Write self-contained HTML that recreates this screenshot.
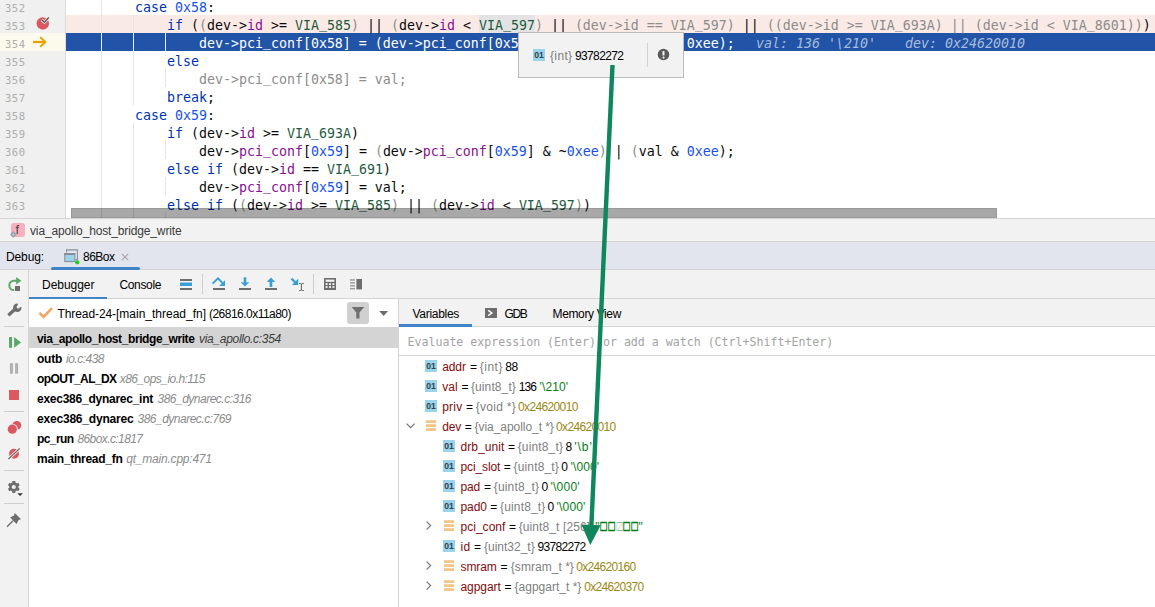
<!DOCTYPE html>
<html lang="en"><head><meta charset="utf-8"><title>Debug</title>
<style>

*{box-sizing:border-box}
html,body{margin:0;padding:0}
body{width:1155px;height:607px;overflow:hidden;background:#fff;position:relative;font-family:"Liberation Sans",sans-serif;font-size:12px;color:#000}
.a{position:absolute}
.t{position:absolute;white-space:pre;line-height:20px;height:20px}
.ln{position:absolute;left:0;height:18px;line-height:18px;white-space:pre;font-family:'DejaVu Sans Mono', 'Liberation Mono', monospace;font-size:13.29px;color:#080808}
.num{position:absolute;left:5px;width:30px;height:18px;line-height:18px;font-family:'DejaVu Sans Mono', 'Liberation Mono', monospace;font-size:10.6px;letter-spacing:0.45px;color:#adadad}
.k{color:#0033b3}.n{color:#1750eb}.f{color:#871094}.m{color:#1f5b3f}.g{color:#8c8c8c}.d{color:#080808}
.hl{background:#e3e3e3}
.ln u{text-decoration:none;position:relative;top:-1.6px}
.hb{position:absolute;left:0;width:1155px;height:1px;background:#d4d4d4}
.ic{position:absolute;width:12px;height:11px;background:#9ad3ea}
svg{position:absolute;overflow:visible}

</style></head>
<body>

<div class="a" id="editor" style="left:0;top:0;width:1155px;height:218px;overflow:hidden;background:#fff">
<div class="a" style="left:0;top:0;width:66px;height:218px;background:#f0f0f0;border-right:1px solid #dcdcdc"></div>
<div class="a" style="left:66px;top:15px;width:1089px;height:18px;background:#faeae6"></div>
<div class="a" style="left:66px;top:33px;width:1089px;height:18px;background:#2154a6"></div>
<div class="a" style="left:0;top:33px;width:65px;height:18px;background:#fcfaed"></div>
<div class="a" style="left:479px;top:15px;width:56px;height:18px;background:#e3e3e3"></div>
<div class="a" style="left:101px;top:0px;width:1px;height:218px;background:#e4e4e4"></div>
<div class="a" style="left:133px;top:15px;width:1px;height:90px;background:#e4e4e4"></div>
<div class="a" style="left:133px;top:123px;width:1px;height:95px;background:#e4e4e4"></div>
<div class="a" style="left:165px;top:69px;width:1px;height:18px;background:#e4e4e4"></div>
<div class="a" style="left:165px;top:141px;width:1px;height:18px;background:#e4e4e4"></div>
<div class="a" style="left:165px;top:177px;width:1px;height:18px;background:#e4e4e4"></div>
<div class="a" style="left:165px;top:213px;width:1px;height:5px;background:#e4e4e4"></div>
<div class="a" style="left:101px;top:33px;width:1px;height:18px;background:#e9edf5"></div>
<div class="a" style="left:133px;top:33px;width:1px;height:18px;background:#e9edf5"></div>
<div class="a" style="left:165px;top:33px;width:1px;height:18px;background:#e9edf5"></div>
<div class="num" style="top:-1px;">352</div>
<div class="ln" style="top:-1px;left:71px;">        <span class="k">case</span> <span class="n">0x58</span>:</div>
<div class="num" style="top:17px;">353</div>
<div class="ln" style="top:17px;left:71px;">            <span class="k">if</span> (<span class="g">(</span>dev-&gt;<span class="f">id</span> &gt;= <span class="m">VIA<u>_</u>585</span><span class="g">)</span> || <span class="g">(</span>dev-&gt;<span class="f">id</span> &lt; <span class="m">VIA<u>_</u>597</span><span class="g">)</span> || <span class="g">(dev-&gt;id == VIA<u>_</u>597)</span> || <span class="g">((dev-&gt;id &gt;= VIA<u>_</u>693A) || (dev-&gt;id &lt; VIA<u>_</u>8601))</span>)</div>
<div class="num" style="top:35px;">354</div>
<div class="ln" style="top:35px;left:71px;"><span style="color:#fff">                dev-&gt;pci<u>_</u>conf[0x58] = (dev-&gt;pci<u>_</u>conf[0x58] &amp; ~0xee) | (val &amp; 0xee);</span></div>
<div class="num" style="top:53px;">355</div>
<div class="ln" style="top:53px;left:71px;">            <span class="k">else</span></div>
<div class="num" style="top:71px;">356</div>
<div class="ln" style="top:71px;left:71px;">                <span class="g">dev-&gt;pci<u>_</u>conf[0x58] = val;</span></div>
<div class="num" style="top:89px;">357</div>
<div class="ln" style="top:89px;left:71px;">            <span class="k">break</span>;</div>
<div class="num" style="top:107px;">358</div>
<div class="ln" style="top:107px;left:71px;">        <span class="k">case</span> <span class="n">0x59</span>:</div>
<div class="num" style="top:125px;">359</div>
<div class="ln" style="top:125px;left:71px;">            <span class="k">if</span> (dev-&gt;<span class="f">id</span> &gt;= <span class="m">VIA<u>_</u>693A</span>)</div>
<div class="num" style="top:143px;">360</div>
<div class="ln" style="top:143px;left:71px;">                dev-&gt;<span class="f">pci<u>_</u>conf</span>[<span class="n">0x59</span>] = <span class="g">(</span>dev-&gt;<span class="f">pci<u>_</u>conf</span>[<span class="n">0x59</span>] &amp; ~<span class="n">0xee</span><span class="g">)</span> | <span class="g">(</span>val &amp; <span class="n">0xee</span>);</div>
<div class="num" style="top:161px;">361</div>
<div class="ln" style="top:161px;left:71px;">            <span class="k">else if</span> (dev-&gt;<span class="f">id</span> == <span class="m">VIA<u>_</u>691</span>)</div>
<div class="num" style="top:179px;">362</div>
<div class="ln" style="top:179px;left:71px;">                dev-&gt;<span class="f">pci<u>_</u>conf</span>[<span class="n">0x59</span>] = val;</div>
<div class="num" style="top:197px;">363</div>
<div class="ln" style="top:197px;left:71px;">            <span class="k">else if</span> (<span class="g">(</span>dev-&gt;<span class="f">id</span> &gt;= <span class="m">VIA<u>_</u>585</span><span class="g">)</span> || <span class="g">(</span>dev-&gt;<span class="f">id</span> &lt; <span class="m">VIA<u>_</u>597</span><span class="g">)</span>)</div>
<div class="num" style="top:215px;">364</div>
<div class="ln" style="top:215px;left:71px;margin-top:1px;">                dev-&gt;<span class="f">pci<u>_</u>conf</span>[<span class="n">0x59</span>] = <span class="g">(</span>dev-&gt;<span class="f">pci<u>_</u>conf</span>[<span class="n">0x59</span>] &amp; ~<span class="n">0xee</span><span class="g">)</span> | <span class="g">(</span>val &amp; <span class="n">0xee</span>);</div>
<div class="ln" style="top:35px;left:756px;font-style:italic;color:#a9bbdc">val: 136 '\210'</div>
<div class="ln" style="top:35px;left:905px;font-style:italic;color:#a9bbdc">dev: 0x24620010</div>
<!-- gutter icons -->
<svg style="left:35px;top:15px" width="16" height="16" viewBox="0 0 16 16"><circle cx="7.8" cy="8.4" r="6.25" fill="#db5860"/><path d="M6.7 4.8 L9.4 7.2 L13.8 2.5" fill="none" stroke="#f4f4f4" stroke-width="3"/><path d="M6.7 4.8 L9.4 7.2 L13.8 2.5" fill="none" stroke="#595959" stroke-width="1.5"/></svg>
<svg style="left:33px;top:35.6px" width="14" height="12" viewBox="0 0 14 12"><path d="M0 6 H12" fill="none" stroke="#e8a200" stroke-width="2.3"/><path d="M7.2 1.1 L12.3 6 L7.2 10.9" fill="none" stroke="#e8a200" stroke-width="2"/></svg>
<!-- h scrollbar -->
<div class="a" style="left:71px;top:208px;width:926px;height:10px;background:rgba(0,0,0,0.34);border:1px solid rgba(0,0,0,0.08)"></div>
</div>

<!-- tooltip -->
<div class="a" style="left:518px;top:32px;width:166px;height:46px;background:#f2f2f2;border:1px solid #bcbcbc"></div>
<div class="a" style="left:647px;top:43px;width:1px;height:24px;background:#d1d1d1"></div>
<svg style="left:657.3px;top:48.4px" width="13" height="13" viewBox="0 0 13 13"><circle cx="6.5" cy="6.5" r="5.8" fill="#5a5a5a"/><rect x="5.5" y="3" width="2" height="4.6" rx="0.6" fill="#f2f2f2"/><circle cx="6.5" cy="9.6" r="1.1" fill="#f2f2f2"/></svg>

<!-- bars -->
<div class="a" style="left:0;top:218px;width:1155px;height:24px;background:#f2f2f2"></div>
<div class="a" style="left:0;top:242px;width:1155px;height:28px;background:#e2e5ee"></div>
<div class="a" style="left:0;top:270px;width:1155px;height:29px;background:#f2f2f2"></div>
<div class="a" style="left:0;top:270px;width:28px;height:337px;background:#f2f2f2"></div>
<div class="a" style="left:398px;top:299px;width:757px;height:28px;background:#f2f2f2"></div>
<div class="hb" style="top:218px"></div>
<div class="hb" style="top:241px"></div>
<div class="hb" style="top:269px"></div>
<div class="hb" style="top:298px;left:28px"></div>
<div class="hb" style="top:326px;left:398px"></div>
<div class="hb" style="top:355px;left:398px"></div>
<div class="a" style="left:28px;top:270px;width:1px;height:337px;background:#d4d4d4"></div>
<div class="a" style="left:398px;top:299px;width:1px;height:308px;background:#d4d4d4"></div>
<!-- tab underlines -->
<div class="a" style="left:51px;top:267px;width:89px;height:3px;background:#4083c9;border-radius:1.5px"></div>
<div class="a" style="left:29px;top:297px;width:78px;height:2px;background:#4083c9"></div>
<div class="a" style="left:399px;top:324px;width:73px;height:3px;background:#4083c9"></div>
<!-- selected frame -->
<div class="a" style="left:29px;top:327px;width:369px;height:21px;background:#d4d4d4"></div>
<!-- filter btn -->
<div class="a" style="left:347px;top:302px;width:22px;height:22px;background:#d0d0d0;border-radius:3px"></div>
<svg style="left:10px;top:222px" width="16" height="16" viewBox="0 0 16 16"><rect x="1" y="1" width="14" height="14" rx="3" fill="#f6b1be"/><path d="M3.3 10 L5.8 12.5 L3.3 15 L0.8 12.5 Z" fill="#bcc4cb" stroke="#8f9ba5" stroke-width="1.1"/></svg>
<span class="t" style="left:15.6px;top:219.6px;font-size:12.5px;color:#4a4446;font-family:'Liberation Sans',sans-serif">f</span>
<svg style="left:63px;top:248px" width="18" height="18" viewBox="0 0 18 18"><path d="M3.6 4.6 V1.9 H14.4 V11.6 H12.4" fill="none" stroke="#8a8f99" stroke-width="1.1"/><rect x="1.8" y="5.6" width="10" height="8" fill="#9ad3ea" stroke="#8a8f99" stroke-width="1.1"/><rect x="1.25" y="5" width="11.1" height="2" fill="#8a8f99"/><circle cx="14.2" cy="14.3" r="2.15" fill="#1fd01f"/></svg>
<svg style="left:121px;top:253px" width="8" height="8" viewBox="0 0 8 8"><path d="M0.8 0.8 L7.2 7.2 M7.2 0.8 L0.8 7.2" stroke="#aaa4b6" stroke-width="1.1" fill="none"/></svg>
<svg style="left:178px;top:276px" width="16" height="16" viewBox="0 0 16 16"><rect x="2" y="3" width="12" height="2" fill="#6e6e6e"/><rect x="2" y="6.5" width="12" height="3.5" fill="#389fd6"/><rect x="2" y="12" width="12" height="2" fill="#6e6e6e"/></svg>
<div class="a" style="left:202px;top:274px;width:1px;height:20px;background:#cdcdcd"></div>
<div class="a" style="left:313px;top:274px;width:1px;height:20px;background:#cdcdcd"></div>
<svg style="left:211px;top:276px" width="16" height="16" viewBox="0 0 16 16"><rect x="2" y="12" width="12" height="2" fill="#6e6e6e"/><path d="M1.6 7.6 L7 2.4 L11.5 6.9" fill="none" stroke="#389fd6" stroke-width="2"/><polygon points="14,4.2 14,10.1 8.1,10.1" fill="#389fd6"/></svg>
<svg style="left:237px;top:276px" width="16" height="16" viewBox="0 0 16 16"><rect x="2" y="12" width="12" height="2" fill="#6e6e6e"/><rect x="6.7" y="1.3" width="2.6" height="5.5" fill="#389fd6"/><polygon points="3.7,6.2 12.3,6.2 8,10.6" fill="#389fd6"/></svg>
<svg style="left:263px;top:276px" width="16" height="16" viewBox="0 0 16 16"><rect x="2" y="12" width="12" height="2" fill="#6e6e6e"/><rect x="6.6" y="5.5" width="2.7" height="5.5" fill="#389fd6"/><polygon points="3.7,5.9 12.2,5.9 7.95,1.5" fill="#389fd6"/></svg>
<svg style="left:289px;top:276px" width="16" height="16" viewBox="0 0 16 16"><path d="M2.4 2.6 L7.5 7.5" stroke="#389fd6" stroke-width="2.2" fill="none"/><polygon points="9.2,2.8 9.2,9 2.8,9" fill="#389fd6"/><path d="M10.1 7.4 Q11.8 7.4 12.4 8 Q13 7.4 14.8 7.4 M10.1 14.6 Q11.8 14.6 12.4 14 Q13 14.6 14.8 14.6 M12.4 8 V14" stroke="#4d4d4d" stroke-width="0.9" fill="none"/></svg>
<svg style="left:322px;top:276px" width="16" height="16" viewBox="0 0 16 16"><rect x="2" y="2" width="12" height="12" fill="#6e6e6e"/><rect x="3.6" y="3.6" width="8.8" height="2.2" fill="#f2f2f2"/><rect x="3.6" y="7.2" width="2" height="1.8" fill="#f2f2f2"/><rect x="3.6" y="10.1" width="2" height="1.8" fill="#f2f2f2"/><rect x="7" y="7.2" width="2" height="1.8" fill="#f2f2f2"/><rect x="7" y="10.1" width="2" height="1.8" fill="#f2f2f2"/><rect x="10.4" y="7.2" width="2" height="1.8" fill="#f2f2f2"/><rect x="10.4" y="10.1" width="2" height="1.8" fill="#f2f2f2"/><rect x="3.6" y="13" width="8.8" height="0" fill="#f2f2f2"/></svg>
<svg style="left:348px;top:276px" width="16" height="16" viewBox="0 0 16 16"><rect x="2" y="3.2" width="5" height="1.5" fill="#9c9c9c"/><rect x="2" y="6.1" width="5" height="1.5" fill="#9c9c9c"/><rect x="2" y="9" width="5" height="1.5" fill="#9c9c9c"/><rect x="2" y="11.9" width="5" height="1.5" fill="#9c9c9c"/><rect x="8.4" y="3" width="5.6" height="10.4" fill="#6e6e6e"/></svg>
<svg style="left:6px;top:276px" width="18" height="18" viewBox="0 0 18 18"><path d="M8 14.1 A4.7 4.7 0 1 1 8 4.7 H11" fill="none" stroke="#59a869" stroke-width="2"/><polygon points="10.2,1 15.4,4.7 10.2,8.4" fill="#59a869"/><rect x="9" y="10" width="5" height="5" fill="#6e6e6e"/></svg>
<svg style="left:6px;top:302px" width="18" height="18" viewBox="0 0 18 18"><path d="M2.3 13.3 L9.6 6.7" stroke="#6e6e6e" stroke-width="3.2" fill="none"/><circle cx="11.3" cy="5.8" r="4.2" fill="#6e6e6e"/><polygon points="11.3,5.8 12.3,-0.5 17.5,4.6" fill="#f2f2f2"/><circle cx="12.2" cy="4.9" r="1.6" fill="#f2f2f2"/></svg>
<div class="a" style="left:4px;top:326px;width:20px;height:1px;background:#cdcdcd"></div>
<div class="a" style="left:4px;top:411px;width:20px;height:1px;background:#cdcdcd"></div>
<div class="a" style="left:4px;top:470px;width:20px;height:1px;background:#cdcdcd"></div>
<div class="a" style="left:4px;top:503px;width:20px;height:1px;background:#cdcdcd"></div>
<svg style="left:8px;top:336px" width="14" height="12" viewBox="0 0 14 12"><rect x="1" y="1" width="3.1" height="10.8" fill="#59a869"/><polygon points="6.1,1 13,6.4 6.1,11.8" fill="#59a869"/></svg>
<svg style="left:9px;top:362px" width="12" height="12" viewBox="0 0 12 12"><rect x="0.9" y="1.2" width="3" height="10.5" fill="#b4b0b2"/><rect x="6.1" y="1.2" width="3" height="10.5" fill="#b4b0b2"/></svg>
<div class="a" style="left:9px;top:390px;width:10px;height:10px;background:#db5860"></div>
<svg style="left:6px;top:419px" width="18" height="18" viewBox="0 0 18 18"><circle cx="10.8" cy="6.3" r="4.4" fill="#db5860"/><circle cx="6.3" cy="10.2" r="5.5" fill="#f2f2f2"/><circle cx="6.3" cy="10.2" r="4.6" fill="#db5860"/></svg>
<svg style="left:6px;top:445px" width="18" height="18" viewBox="0 0 18 18"><circle cx="8" cy="8.7" r="5" fill="#db5860"/><path d="M2.4 14 L13.7 3.5" stroke="#f2f2f2" stroke-width="3" fill="none"/><path d="M2.4 14 L13.7 3.5" stroke="#6e6e6e" stroke-width="1.2" fill="none"/></svg>
<svg style="left:6px;top:479px" width="18" height="18" viewBox="0 0 18 18"><g transform="translate(7.8,8)"><rect x="-1.5" y="-6" width="3" height="3" fill="#6e6e6e" transform="rotate(0)"/><rect x="-1.5" y="-6" width="3" height="3" fill="#6e6e6e" transform="rotate(60)"/><rect x="-1.5" y="-6" width="3" height="3" fill="#6e6e6e" transform="rotate(120)"/><rect x="-1.5" y="-6" width="3" height="3" fill="#6e6e6e" transform="rotate(180)"/><rect x="-1.5" y="-6" width="3" height="3" fill="#6e6e6e" transform="rotate(240)"/><rect x="-1.5" y="-6" width="3" height="3" fill="#6e6e6e" transform="rotate(300)"/><circle r="3.4" fill="none" stroke="#6e6e6e" stroke-width="2.6"/></g><polygon points="11.3,14.2 16.9,14.2 14.1,17" fill="#333"/></svg>
<svg style="left:5px;top:511px" width="18" height="18" viewBox="0 0 18 18"><path d="M2 15.8 L8 9.8" stroke="#6e6e6e" stroke-width="1.4" fill="none"/><polygon points="9.8,2 16,8.2 13.6,9 11.5,12.9 5.1,6.5 9,4.4" fill="#6e6e6e"/></svg>
<svg style="left:38px;top:306px" width="16" height="14" viewBox="0 0 16 14"><path d="M1.6 6.8 L5.6 10.8 L14 2.2" fill="none" stroke="#f4a460" stroke-width="2.6"/></svg>
<svg style="left:347px;top:302px" width="22" height="22" viewBox="0 0 22 22"><polygon points="4.7,4.9 17.2,4.9 12.5,10.6 12.5,16.6 9.3,16.6 9.3,10.6" fill="#6e6e6e"/></svg>
<svg style="left:378px;top:310px" width="12" height="8" viewBox="0 0 12 8"><polygon points="1.2,1 10.1,1 5.65,6" fill="#6e6e6e"/></svg>
<svg style="left:485px;top:308px" width="12" height="10" viewBox="0 0 12 10"><rect width="12" height="10" fill="#6e6e6e"/><path d="M3.2 2.4 L6.8 5 L3.2 7.6" fill="none" stroke="#fff" stroke-width="1.5"/></svg>
<div class="ic" style="left:533px;top:49px;height:12px"></div>
<span class="t" style="left:534.3px;top:45.3px;font-size:8.7px;font-weight:bold;color:#2f4450;letter-spacing:-0.2px;font-family:'Liberation Sans',sans-serif">01</span>
<div class="ic" style="left:425px;top:360px;height:12px"></div>
<span class="t" style="left:426.3px;top:356.3px;font-size:8.7px;font-weight:bold;color:#2f4450;letter-spacing:-0.2px;font-family:'Liberation Sans',sans-serif">01</span>
<div class="ic" style="left:425px;top:380px;height:12px"></div>
<span class="t" style="left:426.3px;top:376.3px;font-size:8.7px;font-weight:bold;color:#2f4450;letter-spacing:-0.2px;font-family:'Liberation Sans',sans-serif">01</span>
<div class="ic" style="left:425px;top:400px;height:12px"></div>
<span class="t" style="left:426.3px;top:396.3px;font-size:8.7px;font-weight:bold;color:#2f4450;letter-spacing:-0.2px;font-family:'Liberation Sans',sans-serif">01</span>
<svg style="left:406px;top:422.7px" width="10" height="6" viewBox="0 0 10 6"><path d="M0.6 0.6 L4.6 4.6 L8.6 0.6" fill="none" stroke="#767676" stroke-width="1.25"/></svg>
<svg style="left:426px;top:420px" width="10" height="11" viewBox="0 0 10 11"><rect x="0" y="0.2" width="10" height="2.8" fill="#f4c587"/><rect x="0" y="4.2" width="10" height="2.8" fill="#f4c587"/><rect x="0" y="8.2" width="10" height="2.8" fill="#f4c587"/></svg>
<div class="ic" style="left:443px;top:440px;height:12px"></div>
<span class="t" style="left:444.3px;top:436.3px;font-size:8.7px;font-weight:bold;color:#2f4450;letter-spacing:-0.2px;font-family:'Liberation Sans',sans-serif">01</span>
<div class="ic" style="left:443px;top:460px;height:12px"></div>
<span class="t" style="left:444.3px;top:456.3px;font-size:8.7px;font-weight:bold;color:#2f4450;letter-spacing:-0.2px;font-family:'Liberation Sans',sans-serif">01</span>
<div class="ic" style="left:443px;top:480px;height:12px"></div>
<span class="t" style="left:444.3px;top:476.3px;font-size:8.7px;font-weight:bold;color:#2f4450;letter-spacing:-0.2px;font-family:'Liberation Sans',sans-serif">01</span>
<div class="ic" style="left:443px;top:500px;height:12px"></div>
<span class="t" style="left:444.3px;top:496.3px;font-size:8.7px;font-weight:bold;color:#2f4450;letter-spacing:-0.2px;font-family:'Liberation Sans',sans-serif">01</span>
<div class="ic" style="left:443px;top:540px;height:12px"></div>
<span class="t" style="left:444.3px;top:536.3px;font-size:8.7px;font-weight:bold;color:#2f4450;letter-spacing:-0.2px;font-family:'Liberation Sans',sans-serif">01</span>
<svg style="left:425.8px;top:520.5px" width="6" height="10" viewBox="0 0 6 10"><path d="M0.6 0.6 L4.6 4.6 L0.6 8.6" fill="none" stroke="#767676" stroke-width="1.25"/></svg>
<svg style="left:444px;top:520px" width="10" height="11" viewBox="0 0 10 11"><rect x="0" y="0.2" width="10" height="2.8" fill="#f4c587"/><rect x="0" y="4.2" width="10" height="2.8" fill="#f4c587"/><rect x="0" y="8.2" width="10" height="2.8" fill="#f4c587"/></svg>
<svg style="left:425.8px;top:560.5px" width="6" height="10" viewBox="0 0 6 10"><path d="M0.6 0.6 L4.6 4.6 L0.6 8.6" fill="none" stroke="#767676" stroke-width="1.25"/></svg>
<svg style="left:444px;top:560px" width="10" height="11" viewBox="0 0 10 11"><rect x="0" y="0.2" width="10" height="2.8" fill="#f4c587"/><rect x="0" y="4.2" width="10" height="2.8" fill="#f4c587"/><rect x="0" y="8.2" width="10" height="2.8" fill="#f4c587"/></svg>
<svg style="left:425.8px;top:580.5px" width="6" height="10" viewBox="0 0 6 10"><path d="M0.6 0.6 L4.6 4.6 L0.6 8.6" fill="none" stroke="#767676" stroke-width="1.25"/></svg>
<svg style="left:444px;top:580px" width="10" height="11" viewBox="0 0 10 11"><rect x="0" y="0.2" width="10" height="2.8" fill="#f4c587"/><rect x="0" y="4.2" width="10" height="2.8" fill="#f4c587"/><rect x="0" y="8.2" width="10" height="2.8" fill="#f4c587"/></svg>
<span class="t" id="t0" style="left:550px;top:46px;font-size:12px;font-family:'Liberation Sans', sans-serif;letter-spacing:0.359px;color:#808080">{int}</span>
<span class="t" id="t1" style="left:575px;top:46px;font-size:12px;font-family:'Liberation Sans', sans-serif;letter-spacing:-0.636px;">93782272</span>
<span class="t" id="t2" style="left:30px;top:221px;font-size:12px;font-family:'Liberation Sans', sans-serif;letter-spacing:-0.141px;color:#3b3b3b">via_apollo_host_bridge_write</span>
<span class="t" id="t3" style="left:6px;top:247px;font-size:12px;font-family:'Liberation Sans', sans-serif;letter-spacing:-0.117px;">Debug:</span>
<span class="t" id="t4" style="left:83px;top:247px;font-size:12px;font-family:'Liberation Sans', sans-serif;letter-spacing:-0.506px;">86Box</span>
<span class="t" id="t5" style="left:42px;top:275px;font-size:12px;font-family:'Liberation Sans', sans-serif;letter-spacing:-0.027px;">Debugger</span>
<span class="t" id="t6" style="left:119.5px;top:275px;font-size:12px;font-family:'Liberation Sans', sans-serif;letter-spacing:-0.362px;">Console</span>
<span class="t" id="t7" style="left:57.5px;top:304px;font-size:12px;font-family:'Liberation Sans', sans-serif;letter-spacing:-0.087px;">Thread-24-</span>
<span class="t" id="t8" style="left:116px;top:304px;font-size:12px;font-family:'Liberation Sans', sans-serif;letter-spacing:-0.004px;">[main_thread_fn]</span>
<span class="t" id="t9" style="left:209px;top:304px;font-size:12px;font-family:'Liberation Sans', sans-serif;letter-spacing:-0.524px;">(26816.0x11a80)</span>
<span class="t" id="t10" style="left:37px;top:329px;font-size:12px;font-family:'Liberation Sans', sans-serif;letter-spacing:-0.401px;font-weight:bold">via_apollo_host_bridge_write</span>
<span class="t" id="t11" style="left:199px;top:329px;font-size:12px;font-family:'Liberation Sans', sans-serif;letter-spacing:-0.296px;font-style:italic;color:#3c3c3c">via_apollo.c:354</span>
<span class="t" id="t12" style="left:37px;top:349px;font-size:12px;font-family:'Liberation Sans', sans-serif;letter-spacing:-0.250px;font-weight:bold">outb</span>
<span class="t" id="t13" style="left:66px;top:349px;font-size:12px;font-family:'Liberation Sans', sans-serif;letter-spacing:-0.504px;font-style:italic;color:#8c8c8c">io.c:438</span>
<span class="t" id="t14" style="left:37px;top:369px;font-size:12px;font-family:'Liberation Sans', sans-serif;letter-spacing:-0.592px;font-weight:bold">opOUT_AL_DX</span>
<span class="t" id="t15" style="left:119.8px;top:369px;font-size:12px;font-family:'Liberation Sans', sans-serif;letter-spacing:-0.554px;font-style:italic;color:#8c8c8c">x86_ops_io.h:115</span>
<span class="t" id="t16" style="left:37px;top:389px;font-size:12px;font-family:'Liberation Sans', sans-serif;letter-spacing:-0.250px;font-weight:bold">exec386_dynarec_int</span>
<span class="t" id="t17" style="left:157.5px;top:389px;font-size:12px;font-family:'Liberation Sans', sans-serif;letter-spacing:-0.505px;font-style:italic;color:#8c8c8c">386_dynarec.c:316</span>
<span class="t" id="t18" style="left:37px;top:409px;font-size:12px;font-family:'Liberation Sans', sans-serif;letter-spacing:-0.195px;font-weight:bold">exec386_dynarec</span>
<span class="t" id="t19" style="left:137.5px;top:409px;font-size:12px;font-family:'Liberation Sans', sans-serif;letter-spacing:-0.505px;font-style:italic;color:#8c8c8c">386_dynarec.c:769</span>
<span class="t" id="t20" style="left:37px;top:429px;font-size:12px;font-family:'Liberation Sans', sans-serif;letter-spacing:-0.586px;font-weight:bold">pc_run</span>
<span class="t" id="t21" style="left:77.4px;top:429px;font-size:12px;font-family:'Liberation Sans', sans-serif;letter-spacing:-0.589px;font-style:italic;color:#8c8c8c">86box.c:1817</span>
<span class="t" id="t22" style="left:37px;top:449px;font-size:12px;font-family:'Liberation Sans', sans-serif;letter-spacing:-0.276px;font-weight:bold">main_thread_fn</span>
<span class="t" id="t23" style="left:126.3px;top:449px;font-size:12px;font-family:'Liberation Sans', sans-serif;letter-spacing:-0.216px;font-style:italic;color:#8c8c8c">qt_main.cpp:471</span>
<span class="t" id="t24" style="left:412.5px;top:304px;font-size:12px;font-family:'Liberation Sans', sans-serif;letter-spacing:-0.293px;">Variables</span>
<span class="t" id="t25" style="left:504.5px;top:304px;font-size:12px;font-family:'Liberation Sans', sans-serif;letter-spacing:-1.339px;">GDB</span>
<span class="t" id="t26" style="left:552.5px;top:304px;font-size:12px;font-family:'Liberation Sans', sans-serif;letter-spacing:-0.361px;">Memory View</span>
<span class="t" id="t27" style="left:407.5px;top:332px;font-size:11.6px;font-family:'DejaVu Sans Mono', 'Liberation Mono', monospace;letter-spacing:-0.000px;color:#a3a3a3">Evaluate expression (Enter) or add a watch (Ctrl+Shift+Enter)</span>
<span class="t" id="t28" style="left:442.2px;top:357px;font-size:12px;font-family:'Liberation Sans', sans-serif;letter-spacing:-0.083px;color:#820d0d">addr</span>
<span class="t" id="t29" style="left:469.9px;top:357px;font-size:12px;font-family:'Liberation Sans', sans-serif;letter-spacing:-0.416px;color:#000">=</span>
<span class="t" id="t30" style="left:479.8px;top:357px;font-size:12px;font-family:'Liberation Sans', sans-serif;letter-spacing:0.479px;color:#808080">{int}</span>
<span class="t" id="t31" style="left:505.2px;top:357px;font-size:12px;font-family:'Liberation Sans', sans-serif;letter-spacing:-0.380px;color:#000">88</span>
<span class="t" id="t32" style="left:442.2px;top:377px;font-size:12px;font-family:'Liberation Sans', sans-serif;letter-spacing:0.085px;color:#820d0d">val</span>
<span class="t" id="t33" style="left:461.6px;top:377px;font-size:12px;font-family:'Liberation Sans', sans-serif;letter-spacing:-0.416px;color:#000">=</span>
<span class="t" id="t34" style="left:470.9px;top:377px;font-size:12px;font-family:'Liberation Sans', sans-serif;letter-spacing:0.117px;color:#808080">{uint8_t}</span>
<span class="t" id="t35" style="left:518.7px;top:377px;font-size:12px;font-family:'Liberation Sans', sans-serif;letter-spacing:-0.877px;color:#000">136</span>
<span class="t" id="t36" style="left:539.5px;top:377px;font-size:12px;font-family:'Liberation Sans', sans-serif;letter-spacing:0.144px;color:#067d17">&#x27;\210&#x27;</span>
<span class="t" id="t37" style="left:442.2px;top:397px;font-size:12px;font-family:'Liberation Sans', sans-serif;letter-spacing:0.214px;color:#820d0d">priv</span>
<span class="t" id="t38" style="left:466.1px;top:397px;font-size:12px;font-family:'Liberation Sans', sans-serif;letter-spacing:-0.416px;color:#000">=</span>
<span class="t" id="t39" style="left:475.7px;top:397px;font-size:12px;font-family:'Liberation Sans', sans-serif;letter-spacing:0.282px;color:#808080">{void *}</span>
<span class="t" id="t40" style="left:518.1px;top:397px;font-size:12px;font-family:'Liberation Sans', sans-serif;letter-spacing:-0.648px;color:#9b8713">0x24620010</span>
<span class="t" id="t41" style="left:442.2px;top:417px;font-size:12px;font-family:'Liberation Sans', sans-serif;letter-spacing:-0.086px;color:#820d0d">dev</span>
<span class="t" id="t42" style="left:464.7px;top:417px;font-size:12px;font-family:'Liberation Sans', sans-serif;letter-spacing:-0.416px;color:#000">=</span>
<span class="t" id="t43" style="left:474.6px;top:417px;font-size:12px;font-family:'Liberation Sans', sans-serif;letter-spacing:-0.055px;color:#808080">{via_apollo_t *}</span>
<span class="t" id="t44" style="left:556.1px;top:417px;font-size:12px;font-family:'Liberation Sans', sans-serif;letter-spacing:-0.668px;color:#9b8713">0x24620010</span>
<span class="t" id="t45" style="left:460.5px;top:437px;font-size:12px;font-family:'Liberation Sans', sans-serif;letter-spacing:0.053px;color:#820d0d">drb_unit</span>
<span class="t" id="t46" style="left:507.9px;top:437px;font-size:12px;font-family:'Liberation Sans', sans-serif;letter-spacing:-0.416px;color:#000">=</span>
<span class="t" id="t47" style="left:517.7px;top:437px;font-size:12px;font-family:'Liberation Sans', sans-serif;letter-spacing:0.150px;color:#808080">{uint8_t}</span>
<span class="t" id="t48" style="left:565.5px;top:437px;font-size:12px;font-family:'Liberation Sans', sans-serif;letter-spacing:-1.388px;color:#000">8</span>
<span class="t" id="t49" style="left:574.2px;top:437px;font-size:12px;font-family:'Liberation Sans', sans-serif;letter-spacing:1.002px;color:#067d17">&#x27;\b&#x27;</span>
<span class="t" id="t50" style="left:460.5px;top:457px;font-size:12px;font-family:'Liberation Sans', sans-serif;letter-spacing:-0.123px;color:#820d0d">pci_slot</span>
<span class="t" id="t51" style="left:503.7px;top:457px;font-size:12px;font-family:'Liberation Sans', sans-serif;letter-spacing:-0.416px;color:#000">=</span>
<span class="t" id="t52" style="left:513.5px;top:457px;font-size:12px;font-family:'Liberation Sans', sans-serif;letter-spacing:0.161px;color:#808080">{uint8_t}</span>
<span class="t" id="t53" style="left:561.3px;top:457px;font-size:12px;font-family:'Liberation Sans', sans-serif;letter-spacing:-0.687px;color:#000">0</span>
<span class="t" id="t54" style="left:570.6px;top:457px;font-size:12px;font-family:'Liberation Sans', sans-serif;letter-spacing:0.094px;color:#067d17">&#x27;\000&#x27;</span>
<span class="t" id="t55" style="left:460.5px;top:477px;font-size:12px;font-family:'Liberation Sans', sans-serif;letter-spacing:-0.177px;color:#820d0d">pad</span>
<span class="t" id="t56" style="left:484px;top:477px;font-size:12px;font-family:'Liberation Sans', sans-serif;letter-spacing:-0.416px;color:#000">=</span>
<span class="t" id="t57" style="left:493.8px;top:477px;font-size:12px;font-family:'Liberation Sans', sans-serif;letter-spacing:0.150px;color:#808080">{uint8_t}</span>
<span class="t" id="t58" style="left:541.6px;top:477px;font-size:12px;font-family:'Liberation Sans', sans-serif;letter-spacing:-0.688px;color:#000">0</span>
<span class="t" id="t59" style="left:550.5px;top:477px;font-size:12px;font-family:'Liberation Sans', sans-serif;letter-spacing:0.227px;color:#067d17">&#x27;\000&#x27;</span>
<span class="t" id="t60" style="left:460.5px;top:497px;font-size:12px;font-family:'Liberation Sans', sans-serif;letter-spacing:-0.076px;color:#820d0d">pad0</span>
<span class="t" id="t61" style="left:490.2px;top:497px;font-size:12px;font-family:'Liberation Sans', sans-serif;letter-spacing:-0.416px;color:#000">=</span>
<span class="t" id="t62" style="left:500px;top:497px;font-size:12px;font-family:'Liberation Sans', sans-serif;letter-spacing:0.161px;color:#808080">{uint8_t}</span>
<span class="t" id="t63" style="left:547.4px;top:497px;font-size:12px;font-family:'Liberation Sans', sans-serif;letter-spacing:-0.687px;color:#000">0</span>
<span class="t" id="t64" style="left:556.5px;top:497px;font-size:12px;font-family:'Liberation Sans', sans-serif;letter-spacing:0.194px;color:#067d17">&#x27;\000&#x27;</span>
<span class="t" id="t65" style="left:460.5px;top:517px;font-size:12px;font-family:'Liberation Sans', sans-serif;letter-spacing:0.025px;color:#820d0d">pci_conf</span>
<span class="t" id="t66" style="left:508.9px;top:517px;font-size:12px;font-family:'Liberation Sans', sans-serif;letter-spacing:-0.416px;color:#000">=</span>
<span class="t" id="t67" style="left:518.7px;top:517px;font-size:12px;font-family:'Liberation Sans', sans-serif;letter-spacing:0.101px;color:#808080">{uint8_t [256]}</span>
<span class="t" id="t68" style="left:460.5px;top:537px;font-size:12px;font-family:'Liberation Sans', sans-serif;letter-spacing:0.428px;color:#820d0d">id</span>
<span class="t" id="t69" style="left:474px;top:537px;font-size:12px;font-family:'Liberation Sans', sans-serif;letter-spacing:-0.416px;color:#000">=</span>
<span class="t" id="t70" style="left:484px;top:537px;font-size:12px;font-family:'Liberation Sans', sans-serif;letter-spacing:-0.002px;color:#808080">{uint32_t}</span>
<span class="t" id="t71" style="left:537.4px;top:537px;font-size:12px;font-family:'Liberation Sans', sans-serif;letter-spacing:-0.649px;color:#000">93782272</span>
<span class="t" id="t72" style="left:460.5px;top:557px;font-size:12px;font-family:'Liberation Sans', sans-serif;letter-spacing:-0.114px;color:#820d0d">smram</span>
<span class="t" id="t73" style="left:500.6px;top:557px;font-size:12px;font-family:'Liberation Sans', sans-serif;letter-spacing:-0.416px;color:#000">=</span>
<span class="t" id="t74" style="left:510.8px;top:557px;font-size:12px;font-family:'Liberation Sans', sans-serif;letter-spacing:0.036px;color:#808080">{smram_t *}</span>
<span class="t" id="t75" style="left:576.3px;top:557px;font-size:12px;font-family:'Liberation Sans', sans-serif;letter-spacing:-0.698px;color:#9b8713">0x24620160</span>
<span class="t" id="t76" style="left:460.5px;top:577px;font-size:12px;font-family:'Liberation Sans', sans-serif;letter-spacing:-0.058px;color:#820d0d">agpgart</span>
<span class="t" id="t77" style="left:504.6px;top:577px;font-size:12px;font-family:'Liberation Sans', sans-serif;letter-spacing:-0.416px;color:#000">=</span>
<span class="t" id="t78" style="left:514.5px;top:577px;font-size:12px;font-family:'Liberation Sans', sans-serif;letter-spacing:0.013px;color:#808080">{agpgart_t *}</span>
<span class="t" id="t79" style="left:584.2px;top:577px;font-size:12px;font-family:'Liberation Sans', sans-serif;letter-spacing:-0.668px;color:#9b8713">0x24620370</span>
<span class="t" id="t80" style="left:595.2px;top:517px;font-size:12px;font-family:'Liberation Sans','DejaVu Sans',sans-serif;letter-spacing:0.681px;"><span style="color:#067d17">"<b>⎕⎕</b></span><span style="color:#8fbf9a">⍁</span><span style="color:#067d17"><b>⎕⎕</b>"</span></span>
<!-- arrow annotation -->
<svg style="left:0;top:0" width="1155" height="607" viewBox="0 0 1155 607"><line x1="612.5" y1="65" x2="591.3" y2="527" stroke="#0f865c" stroke-width="4.4"/><polygon points="581.4,524.5 600.7,525.3 590.3,545" fill="#0f865c"/></svg>

</body></html>
